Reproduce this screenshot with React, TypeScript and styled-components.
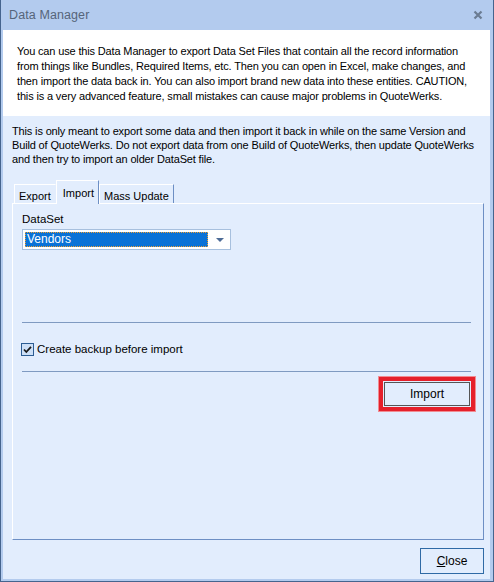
import { type FC } from "react";
import styled, { createGlobalStyle } from "styled-components";

const GlobalStyle = createGlobalStyle`
  html, body {
    margin: 0;
    padding: 0;
    background: #e2edfd;
  }
  * {
    box-sizing: border-box;
  }
`;

const introLines = [
  "You can use this Data Manager to export Data Set Files that contain all the record information",
  "from things like Bundles, Required Items, etc.  Then you can open in Excel, make changes, and",
  "then import the data back in. You can also import brand new data into these entities. CAUTION,",
  "this is a very advanced feature, small mistakes can cause major problems in QuoteWerks.",
];

const noteLines = [
  "This is only meant to export some data and then import it back in while on the same Version and",
  "Build of QuoteWerks. Do not export data from one Build of QuoteWerks, then update QuoteWerks",
  "and then try to import an older DataSet file.",
];

const tabs = ["Export", "Import", "Mass Update"];

const App: FC = () => {
  return (
    <>
      <GlobalStyle />
      <Window>
        <TitleBar>
          <span className="title">Data Manager</span>
          <CloseX viewBox="0 0 10 10">
            <path d="M1.5 1.5 L8.5 8.5 M8.5 1.5 L1.5 8.5" />
          </CloseX>
        </TitleBar>
        <Content>
          <Intro>
            {introLines.map((line, i) => (
              <div key={i}>{line}</div>
            ))}
          </Intro>
          <Note>
            {noteLines.map((line, i) => (
              <div key={i}>{line}</div>
            ))}
          </Note>
          <TabStrip>
            {tabs.map((tab) => (
              <Tab key={tab} $active={tab === "Import"} $last={tab === "Mass Update"}>
                {tab}
              </Tab>
            ))}
          </TabStrip>
          <Panel>
            <Label>DataSet</Label>
            <Combo>
              <div className="value">Vendors</div>
              <svg className="arrow" viewBox="0 0 8 5" width="8" height="5">
                <path d="M0 0 H8 L4 4 Z" fill="#4d6b96" />
              </svg>
            </Combo>
            <Separator $top={72} />
            <CheckRow>
              <CheckBox>
                <svg viewBox="0 0 11 11" width="11" height="11">
                  <path d="M2 5.5 L4.3 8 L9 2.8" stroke="#1a1a1a" strokeWidth="1.8" fill="none" />
                </svg>
              </CheckBox>
              Create backup before import
            </CheckRow>
            <Separator $top={15} />
            <ActionRow>
              <Highlight>
                <Button $w={86} $h={24}>Import</Button>
              </Highlight>
            </ActionRow>
          </Panel>
          <Footer>
            <Button $w={64} $h={26} $blue>
              <u>C</u>lose
            </Button>
          </Footer>
        </Content>
      </Window>
    </>
  );
};

export default App;

const Window = styled.div`
  width: 494px;
  height: 582px;
  display: flex;
  flex-direction: column;
  background: #b3cbee;
  border: 1px solid #45648e;
  border-top: none;
  padding: 0 3px 2px 2px;
  font-family: "Liberation Sans", Arial, sans-serif;
  font-size: 11px;
  color: #000;
`;

const TitleBar = styled.div`
  height: 30px;
  flex: none;
  display: flex;
  align-items: center;
  justify-content: space-between;
  padding: 0 9px 0 8px;
  margin: 0 -3px 0 -2px;
  background: #b3cbee;

  .title {
    font-size: 12.5px;
    color: #56657a;
    letter-spacing: 0.1px;
  }
`;

const CloseX = styled.svg`
  width: 10px;
  height: 10px;
  margin-right: 1px;

  path {
    stroke: #6b7c92;
    stroke-width: 2.2;
  }
`;

const Content = styled.div`
  flex: 1;
  display: flex;
  flex-direction: column;
  background: #e2edfd;
  padding-bottom: 5px;
`;

const Intro = styled.div`
  height: 86px;
  flex: none;
  background: #fff;
  padding: 14px 0 0 14px;
  line-height: 15px;
  white-space: nowrap;
  letter-spacing: -0.15px;
`;

const Note = styled.div`
  padding: 8px 0 0 9px;
  line-height: 14px;
  white-space: nowrap;
  letter-spacing: -0.15px;
`;

const TabStrip = styled.div`
  display: flex;
  align-items: flex-end;
  height: 23px;
  margin: 14px 0 0 11px;
`;

const Tab = styled.div<{ $active?: boolean; $last?: boolean }>`
  height: ${(p) => (p.$active ? 24 : 19)}px;
  padding: ${(p) => (p.$active ? "5px 4px 0 6px" : "4px 4px 0 4px")};
  border-top: 1px solid #fff;
  border-left: 1px solid #fff;
  border-right: 1px solid ${(p) => (p.$last || p.$active ? "#6d8fc4" : "transparent")};
  background: #e2edfd;
  line-height: 14px;
  font-size: 11px;
  margin-bottom: ${(p) => (p.$active ? -1 : 0)}px;
  position: relative;
  z-index: ${(p) => (p.$active ? 1 : 0)};
`;

const Panel = styled.div`
  flex: 1;
  margin: 0 6px 0 9px;
  border-top: 1px solid #fff;
  border-left: 1px solid #fff;
  border-right: 1px solid #6d8fc4;
  border-bottom: 1px solid #6d8fc4;
  padding: 7px 12px 0 9px;
  display: flex;
  flex-direction: column;
`;

const Label = styled.div`
  font-size: 11.5px;
  line-height: 16px;
  margin-bottom: 2px;
`;

const Combo = styled.div`
  width: 209px;
  height: 21px;
  background: #fff;
  border: 1px solid #a7c0de;
  display: flex;
  align-items: center;
  padding: 2px 6px 2px 2px;
  gap: 8px;

  .value {
    flex: 1;
    height: 15px;
    background: #0a72d6;
    color: #fff;
    font-size: 12px;
    line-height: 13px;
    padding-left: 1px;
    border: 1px dotted #000;
    outline: 1px dotted #f0a030;
    outline-offset: -1px;
  }

  .arrow {
    margin-top: 1px;
  }
`;

const Separator = styled.div<{ $top: number }>`
  height: 1px;
  margin-top: ${(p) => p.$top}px;
  background: #7f9ac1;
`;

const CheckRow = styled.div`
  display: flex;
  align-items: center;
  gap: 3px;
  margin-top: 19px;
  margin-left: -1px;
  height: 14px;
  font-size: 11.5px;
`;

const CheckBox = styled.div`
  width: 13px;
  height: 13px;
  border: 1px solid #2b5c93;
  background: #cde0f7;
  display: flex;
  align-items: center;
  justify-content: center;
`;

const ActionRow = styled.div`
  display: flex;
  justify-content: flex-end;
  margin-top: 5px;
  margin-right: -4px;
`;

const Highlight = styled.div`
  border: 4px solid #e5202b;
  outline: 1px solid #f08c92;
  padding: 1px;
`;

const Button = styled.div<{ $w: number; $h: number; $blue?: boolean }>`
  width: ${(p) => p.$w}px;
  height: ${(p) => p.$h}px;
  border: 1px solid ${(p) => (p.$blue ? "#2f6aa5" : "#555")};
  background: #e2edfd;
  display: flex;
  align-items: center;
  justify-content: center;
  font-size: 12px;
`;

const Footer = styled.div`
  display: flex;
  justify-content: flex-end;
  padding: 8px 6px 0 0;
`;
